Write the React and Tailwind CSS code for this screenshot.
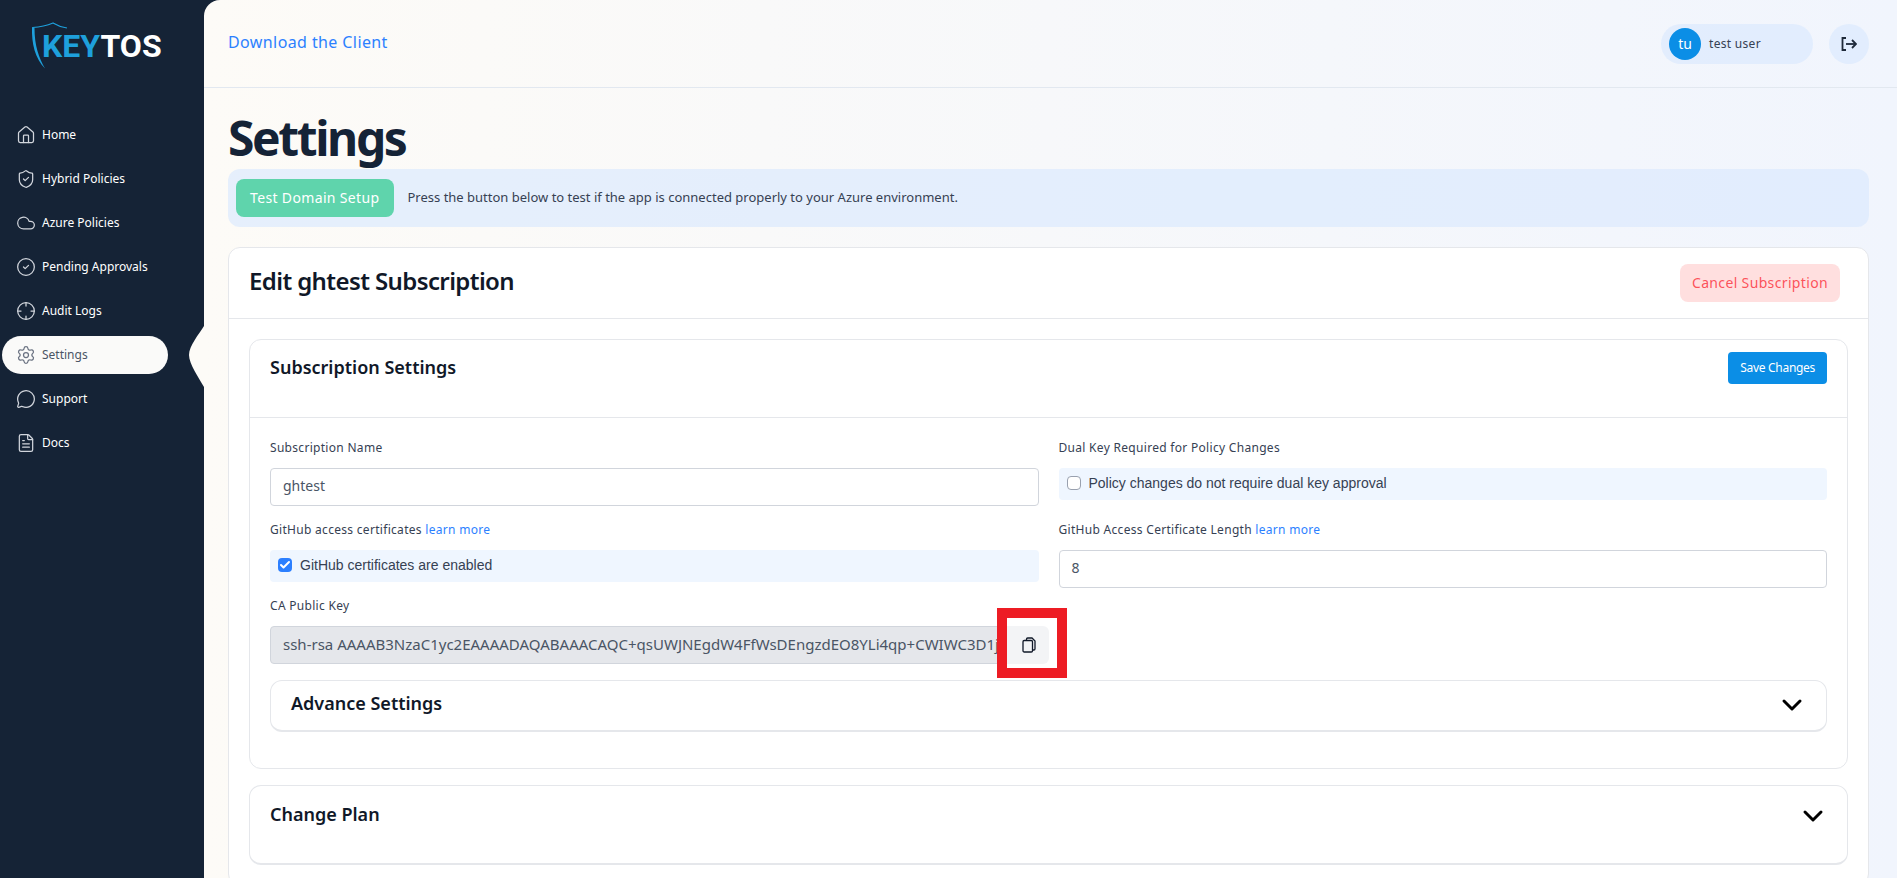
import { Home, ShieldCheck, Cloud, CircleCheck, Crosshair, Settings, MessageCircle, FileText, ChevronDown, Check } from "lucide-react";

const navItems = [
  { label: "Home", icon: Home },
  { label: "Hybrid Policies", icon: ShieldCheck },
  { label: "Azure Policies", icon: Cloud },
  { label: "Pending Approvals", icon: CircleCheck },
  { label: "Audit Logs", icon: Crosshair },
  { label: "Settings", icon: Settings, active: true },
  { label: "Support", icon: MessageCircle },
  { label: "Docs", icon: FileText },
];

function Logo() {
  return (
    <div className="relative flex h-23 items-center pl-10.5">
      <svg className="absolute left-7 top-5 h-14 w-12" viewBox="0 0 48 56" fill="none" stroke="#1ea0dc" strokeWidth="1.2">
        <path d="M4.5 7.5 C 12 7 19 5.5 25 3 C 29 5.5 33 7 39 8" />
        <path d="M4 7 C 3.5 24 7 38 17 48.5 C 11 38 6.5 26 6.5 8 Z" fill="#1ea0dc" stroke="none" />
      </svg>
      <span className="font-['Roboto',sans-serif] text-[32px] font-bold text-[#1ea0dc]">
        KEY<span className="text-white">TOS</span>
      </span>
    </div>
  );
}

function Sidebar() {
  return (
    <aside className="relative w-[204px] shrink-0 bg-[#152336]">
      <Logo />
      <nav className="mt-6 flex flex-col gap-1.5 pl-0.5">
        {navItems.map((item) => (
          <a
            key={item.label}
            className={`flex h-9.5 w-41.5 items-center gap-1.5 rounded-full pl-3.5 text-xs ${
              item.active ? "bg-stone-50 text-gray-600" : "text-white"
            }`}
          >
            <item.icon className={`h-5 w-5 ${item.active ? "text-gray-500" : "text-gray-300"}`} strokeWidth={1.5} />
            {item.label}
          </a>
        ))}
      </nav>
      <svg className="absolute right-0 top-81 h-16 w-4" viewBox="0 0 16 64" fill="#fdfbf7">
        <path d="M16 2 C 11 10 1 22 1 31 C 1 40 11 54 16 63 Z" />
      </svg>
    </aside>
  );
}

function Header() {
  return (
    <header className="flex h-22 items-center justify-between border-b border-slate-200 pl-6 pr-7">
      <a className="pb-1 text-base tracking-wide text-blue-500">Download the Client</a>
      <div className="flex items-center gap-4">
        <div className="flex h-10 w-38 items-center gap-2 rounded-full bg-blue-100/70 pl-2">
          <span className="flex h-8 w-8 items-center justify-center rounded-full bg-[#0b8ee6] text-sm text-white">tu</span>
          <span className="text-xs tracking-wide text-gray-700">test user</span>
        </div>
        <button className="flex h-10 w-10 items-center justify-center rounded-full bg-blue-100/70 text-gray-800">
          <svg className="h-4 w-4" viewBox="0 0 16 16" fill="none" stroke="currentColor" strokeWidth="1.8">
            <path d="M5 2H1.5v12H5" />
            <path d="M5 8h10" />
            <path d="M11 4l4 4-4 4" />
          </svg>
        </button>
      </div>
    </header>
  );
}

function Field({ label, link, children }) {
  return (
    <div className="flex flex-col gap-3">
      <label className="text-xs tracking-wide text-gray-700">
        {label} {link && <a className="text-blue-500">learn more</a>}
      </label>
      {children}
    </div>
  );
}

function CheckRow({ checked, children }) {
  return (
    <div className="flex h-8 items-center gap-2 rounded-sm bg-blue-50 px-2 pb-0.5 font-['Liberation_Sans',sans-serif] text-sm text-gray-700">
      {checked ? (
        <span className="flex h-3.5 w-3.5 items-center justify-center rounded-sm bg-blue-500">
          <Check className="h-3 w-3 text-white" strokeWidth={4} />
        </span>
      ) : (
        <span className="h-3.5 w-3.5 rounded-sm border border-gray-400 bg-white" />
      )}
      {children}
    </div>
  );
}

function TextBox({ children, disabled }) {
  return (
    <div
      className={`flex h-9.5 items-center overflow-hidden rounded-sm border border-gray-300 px-3 pb-0.5 whitespace-nowrap text-gray-600 ${
        disabled ? "bg-gray-200 text-[15px]" : "bg-white text-sm"
      }`}
    >
      {children}
    </div>
  );
}

function Collapsed({ title, className }) {
  return (
    <div className={`flex items-start justify-between rounded-xl border border-b-2 border-gray-200 bg-white pl-5 pr-4.5 ${className}`}>
      <h3 className="text-lg font-semibold text-gray-900">{title}</h3>
      <ChevronDown className="h-8 w-8 text-black" strokeWidth={2.25} />
    </div>
  );
}

function CopyButton() {
  return (
    <button className="relative -mr-2.5 flex h-9.5 w-12 shrink-0 items-center justify-center rounded-r-md bg-gray-100 pl-2">
      <svg className="h-4 w-4 text-gray-900" viewBox="0 0 16 16" fill="none" stroke="currentColor" strokeWidth="1.3">
        <path d="M5.5 3.5V2.2A1.2 1.2 0 0 1 6.7 1H11l3 3v7.8a1.2 1.2 0 0 1-1.2 1.2h-1.3" />
        <rect x="2" y="3.5" width="9.5" height="11.5" rx="1.2" />
      </svg>
      <span className="absolute -left-1 -top-4.5 h-17.5 w-17.5 border-10 border-[#ed1c24]" />
    </button>
  );
}

export default function App() {
  return (
    <div className="flex h-screen overflow-hidden bg-[#152336] font-['Noto_Sans',sans-serif]">
      <Sidebar />
      <main className="flex-1 overflow-hidden rounded-tl-2xl bg-linear-to-r from-[#fdfbf7] to-[#f1f5fd]">
        <Header />
        <div className="pl-6 pr-7 pt-5">
          <h1 className="text-5xl leading-tight font-bold tracking-tighter text-[#152336]">Settings</h1>
          <div className="mt-px flex items-center gap-3.5 rounded-xl bg-blue-100/70 px-2 py-2.5">
            <button className="h-9.5 rounded-lg bg-[#5fd4ac] px-3.5 text-sm tracking-wide text-white">Test Domain Setup</button>
            <p className="text-[13px] text-gray-700">
              Press the button below to test if the app is connected properly to your Azure environment.
            </p>
          </div>

          <section className="mt-5 rounded-xl border border-gray-200 bg-white">
            <div className="flex items-center justify-between border-b border-gray-200 py-4 pl-5 pr-7">
              <h2 className="pb-1 text-2xl font-semibold tracking-tight text-gray-900">Edit ghtest Subscription</h2>
              <button className="h-9.5 rounded-lg bg-red-200/60 px-3 text-sm tracking-wide text-red-500/80">Cancel Subscription</button>
            </div>

            <div className="p-5">
              <div className="rounded-xl border border-gray-200">
                <div className="flex h-19.5 items-start justify-between border-b border-gray-200 px-5 pt-3">
                  <h3 className="mt-px text-lg font-semibold text-gray-900">Subscription Settings</h3>
                  <button className="h-8 rounded-sm bg-[#0b8ee6] px-3 text-xs tracking-tight text-white">Save Changes</button>
                </div>
                <div className="flex flex-col gap-4 px-5 pt-5.5 pb-9">
                  <div className="grid grid-cols-2 gap-x-5">
                    <div className="flex flex-col gap-4">
                      <Field label="Subscription Name">
                        <TextBox>ghtest</TextBox>
                      </Field>
                      <Field label="GitHub access certificates" link>
                        <CheckRow checked>GitHub certificates are enabled</CheckRow>
                      </Field>
                      <Field label="CA Public Key">
                        <div className="flex">
                          <div className="min-w-0 flex-1">
                            <TextBox disabled>ssh-rsa AAAAB3NzaC1yc2EAAAADAQABAAACAQC+qsUWJNEgdW4FfWsDEngzdEO8YLi4qp+CWIWC3D1j</TextBox>
                          </div>
                          <CopyButton />
                        </div>
                      </Field>
                    </div>
                    <div className="flex flex-col gap-5.5">
                      <Field label="Dual Key Required for Policy Changes">
                        <CheckRow>Policy changes do not require dual key approval</CheckRow>
                      </Field>
                      <Field label="GitHub Access Certificate Length" link>
                        <TextBox>8</TextBox>
                      </Field>
                    </div>
                  </div>
                  <Collapsed title="Advance Settings" className="h-13 pt-2" />
                </div>
              </div>
              <Collapsed title="Change Plan" className="mt-4 h-20 pt-3.5" />
            </div>
          </section>
        </div>
      </main>
    </div>
  );
}
